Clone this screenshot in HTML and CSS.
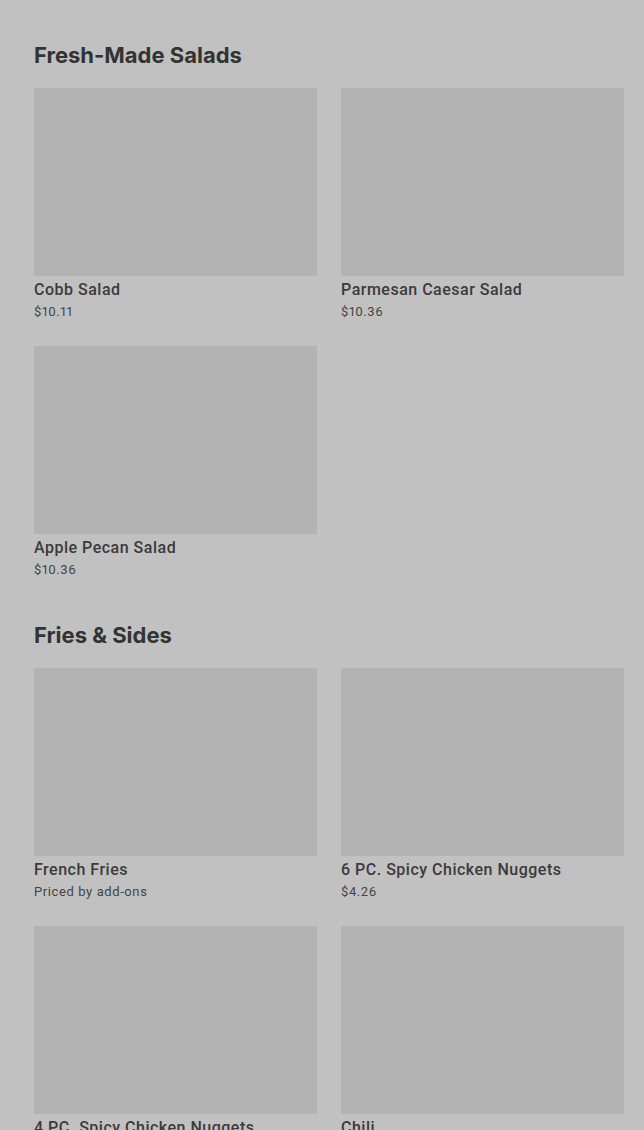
FILE: index.html
```html
<!DOCTYPE html>
<html lang="en">
<head>
    <meta charset="UTF-8">
    <meta name="viewport" content="width=device-width, initial-scale=1.0">
    <title>Menu</title>
    <link rel="stylesheet" href="styles.css">
</head>
<body>
    <main class="menu">
        <section class="menu-section">
            <h2>Fresh-Made Salads</h2>
            <div class="item-grid">
                <div class="item">
                    <div class="item-photo"></div>
                    <p class="item-name">Cobb Salad</p>
                    <p class="item-price">$10.11</p>
                </div>
                <div class="item">
                    <div class="item-photo"></div>
                    <p class="item-name">Parmesan Caesar Salad</p>
                    <p class="item-price">$10.36</p>
                </div>
                <div class="item">
                    <div class="item-photo"></div>
                    <p class="item-name">Apple Pecan Salad</p>
                    <p class="item-price">$10.36</p>
                </div>
            </div>
        </section>

        <section class="menu-section">
            <h2>Fries &amp; Sides</h2>
            <div class="item-grid">
                <div class="item">
                    <div class="item-photo"></div>
                    <p class="item-name">French Fries</p>
                    <p class="item-price">Priced by add-ons</p>
                </div>
                <div class="item">
                    <div class="item-photo"></div>
                    <p class="item-name">6 PC. Spicy Chicken Nuggets</p>
                    <p class="item-price">$4.26</p>
                </div>
                <div class="item">
                    <div class="item-photo"></div>
                    <p class="item-name">4 PC. Spicy Chicken Nuggets</p>
                    <p class="item-price">$3.19</p>
                </div>
                <div class="item">
                    <div class="item-photo"></div>
                    <p class="item-name">Chili</p>
                    <p class="item-price">$3.49</p>
                </div>
            </div>
        </section>
    </main>
</body>
</html>
```

FILE: styles.css
```css
body {
    font-family: Roboto, 'Liberation Sans', Arial, sans-serif;
    background-color: #c1c1c1;
    color: #3b3b3b;
    margin: 0;
    padding: 0;
}
.menu {
    padding: 0 20px 0 34px;
}
.menu-section {
    padding-top: 41px;
}
.menu-section h2 {
    font-family: Inter, 'Liberation Sans', sans-serif;
    font-size: 22px;
    font-weight: 700;
    line-height: 28px;
    margin: 0 0 19px;
    color: #333;
}
.item-grid {
    display: grid;
    grid-template-columns: 1fr 1fr;
    column-gap: 24px;
    row-gap: 24px;
}
.item-photo {
    height: 188px;
    background-color: #b3b3b3;
}
.item-name {
    font-size: 16px;
    font-weight: 500;
    letter-spacing: 0.5px;
    line-height: 20px;
    margin: 4px 0 0;
}
.item-price {
    font-size: 13px;
    letter-spacing: 0.6px;
    font-variant-numeric: proportional-nums;
    line-height: 20px;
    margin: 2px 0 0;
    color: #444;
}
```
